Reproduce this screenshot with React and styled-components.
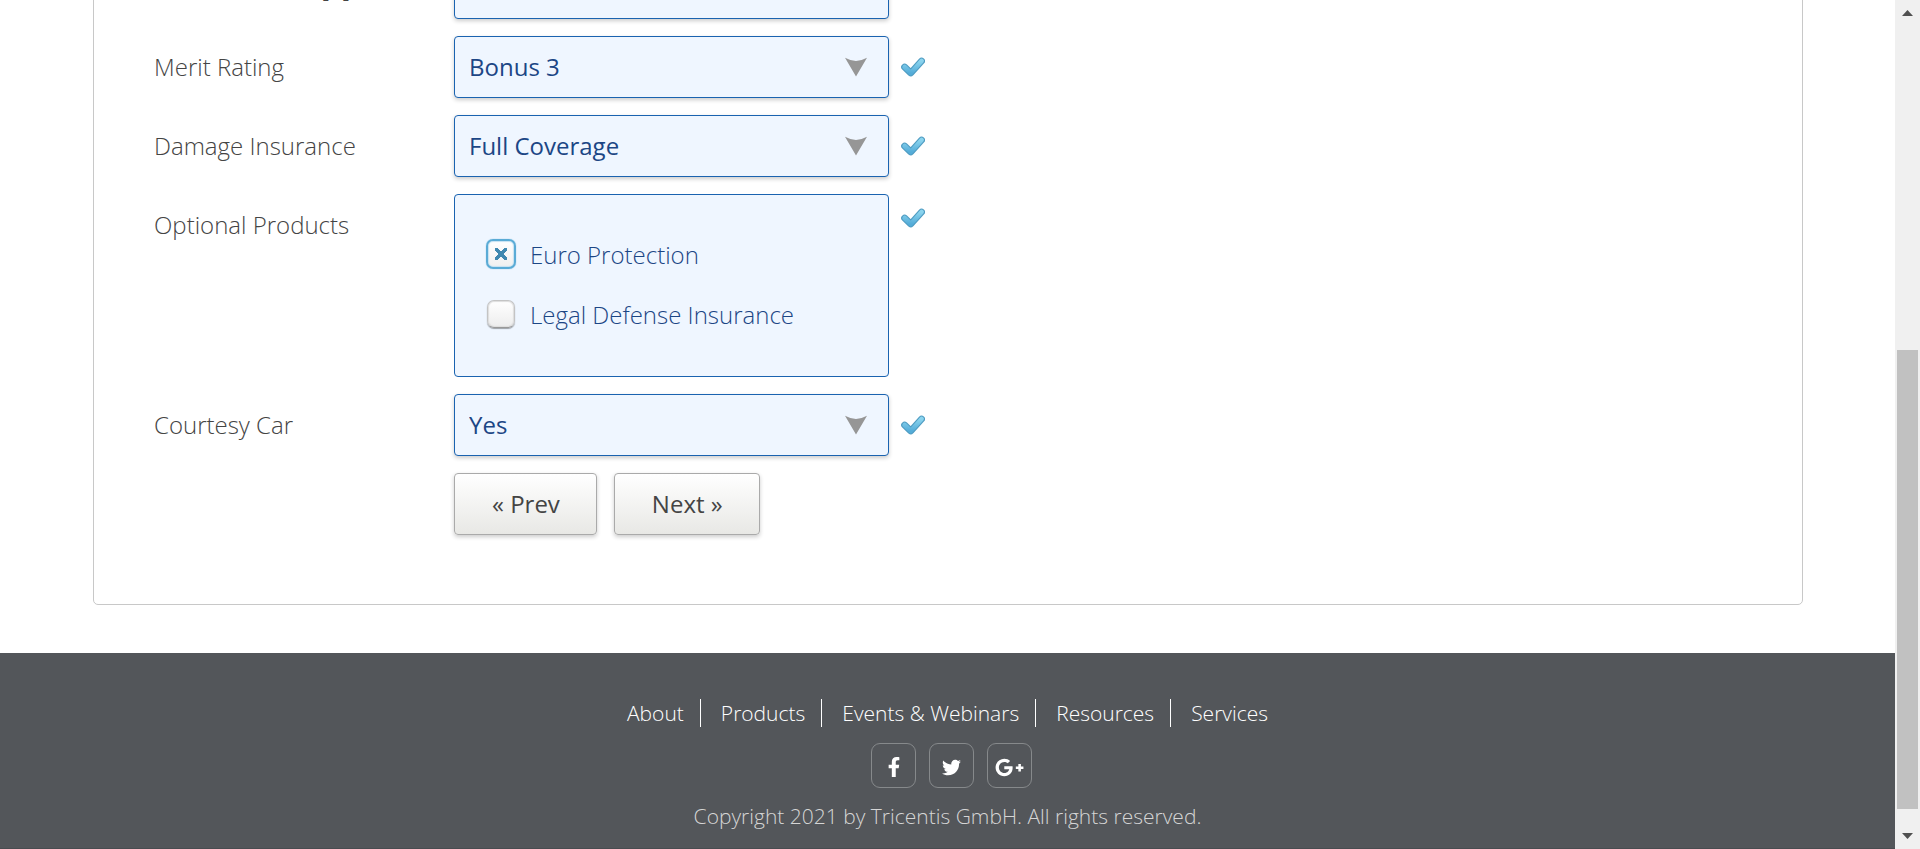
import React from "react";
import styled, { createGlobalStyle, css } from "styled-components";
import { FaFacebookF, FaGooglePlusG, FaTwitter } from "react-icons/fa";

const GlobalStyle = createGlobalStyle`
  *, *::before, *::after { box-sizing: border-box; }
  body {
    margin: 0;
    background: #fff;
    color: #444;
    font: 300 24px/32px "Open Sans", "Liberation Sans", sans-serif;
  }
`;

const Window = styled.div`
  display: flex;
  min-height: 100vh;
  overflow: hidden;
`;

const Page = styled.div`
  flex: 1;
  min-width: 0;
  display: flex;
  flex-direction: column;
`;

const Main = styled.main`
  flex: 1;
  padding: 0 92px 48px 93px;
`;

/* The form is scrolled so that its first visible row is cut by the window's top edge. */
const Card = styled.form`
  display: flex;
  flex-direction: column;
  gap: 17px;
  margin-top: -44px;
  padding: 0 60px 69px;
  border: 1px solid #c8c8c8;
  border-radius: 5px;
`;

const Row = styled.div`
  display: flex;
  align-items: flex-start;
`;

const labelText = css`
  width: 300px;
  flex: none;
  padding-top: 15px;
`;

const Label = styled.label`
  ${labelText}
`;

const Caption = styled.span`
  ${labelText}
`;

const box = css`
  width: 435px;
  background: #eff6ff;
  border: 1px solid #1a63b0;
  border-radius: 4px;
  color: #1c4685;
`;

const SelectWrap = styled.div`
  display: grid;
  align-items: center;
  > * { grid-area: 1 / 1; }
`;

const Select = styled.select`
  ${box}
  appearance: none;
  height: 62px;
  padding: 0 60px 0 14px;
  box-shadow: 0 2px 4px rgba(0, 0, 0, 0.2);
  font: 400 24px/32px "Open Sans", "Liberation Sans", sans-serif;
`;

const ArrowIcon = styled.svg`
  justify-self: end;
  margin-right: 22px;
  pointer-events: none;
`;

const ValidMark = styled.svg`
  flex: none;
  margin: ${(p) => (p.$high ? "13px" : "20px")} 0 0 12px;
`;

const Group = styled.fieldset`
  ${box}
  display: flex;
  flex-direction: column;
  gap: 28px;
  height: 183px;
  margin: 0;
  padding: 44px 31px 0;
`;

const Option = styled.label`
  display: flex;
  align-items: flex-start;
  gap: 14px;
`;

const Tick = styled.input`
  appearance: none;
  flex: none;
  width: 28px;
  height: 28px;
  margin: 1px;
  border: 1px solid #c4c4c4;
  border-bottom-color: #999;
  border-radius: 7px;
  background: linear-gradient(#fff, #ededed);
  background-clip: padding-box;
  box-shadow: inset 0 0 1px 1px #ddd, 0 1px 1px rgba(0, 0, 0, 0.35);

  &:checked {
    width: 30px;
    height: 30px;
    margin: 0;
    border: 2px solid #5aabd6;
    box-shadow: 0 0 1px #5aabd6, inset 0 0 1px 1px #c5e2f2;
    background:
      linear-gradient(45deg, transparent 39%, #4088b0 41%, #4088b0 59%, transparent 61%) center / 12px 12px no-repeat,
      linear-gradient(-45deg, transparent 39%, #4088b0 41%, #4088b0 59%, transparent 61%) center / 12px 12px no-repeat,
      linear-gradient(#fff, #f0f0f0);
  }
`;

const Actions = styled.div`
  display: flex;
  gap: 17px;
  padding-left: 300px;
`;

const Button = styled.button`
  height: 62px;
  padding: 0 36px 0 37px;
  border: 1px solid #aaa;
  border-radius: 4px;
  background: linear-gradient(#fff, #e8e8e5);
  box-shadow: 0 2px 4px rgba(0, 0, 0, 0.2);
  color: #444;
  font: 400 24px/32px "Open Sans", "Liberation Sans", sans-serif;
`;

const Footer = styled.footer`
  display: flex;
  flex-direction: column;
  align-items: center;
  padding: 46px 0 18px;
  background: #53565a;
  border-bottom: 1px solid #494c50;
  color: #d5d5d5;
  font-size: 21px;
  line-height: 28px;
`;

const Links = styled.nav`
  display: flex;
`;

const FooterLink = styled.a`
  padding: 0 20px;
  color: #fff;
  text-decoration: none;
  &:not(:last-child) {
    padding-right: 16px;
    border-right: 1px solid #fff;
  }
`;

const Social = styled.div`
  display: flex;
  gap: 13px;
  margin: 16px 0 14px 8px;
`;

const SocialLink = styled.a`
  display: flex;
  align-items: center;
  justify-content: center;
  width: 45px;
  height: 45px;
  padding-top: 3px;
  border: 1px solid #86898b;
  border-radius: 9px;
  color: #fff;
`;

const Copyright = styled.p`
  margin: 0;
`;

const ScrollTrack = styled.div`
  display: flex;
  flex-direction: column;
  align-items: center;
  flex: none;
  width: 25px;
  padding: 10px 0;
  background: #f0f0f0;
`;

const ScrollSpace = styled.div`
  flex: 334;
`;

const ScrollThumb = styled.div`
  flex: 459;
  width: 21px;
  margin-bottom: 24px;
  background: #c1c1c1;
`;

const Arrow = () => (
  <ArrowIcon width="22" height="20" viewBox="0 0 22 20" aria-hidden="true">
    <path d="M0 0.8Q11 7 22 0.8L11 19.4Z" fill="#969696" />
  </ArrowIcon>
);

const Valid = ({ high }) => (
  <ValidMark $high={high} width="24" height="22" viewBox="0 0 24 22" aria-hidden="true">
    <defs>
      <linearGradient id="tick" x1="0" y1="0" x2="0" y2="1">
        <stop offset="0" stopColor="#8bd4ee" />
        <stop offset="1" stopColor="#54acd8" />
      </linearGradient>
    </defs>
    <path d="M3.6 11L9.8 17L20.6 5" fill="none" stroke="#4f9cc2" strokeWidth="6.8" strokeLinecap="round" strokeLinejoin="round" />
    <path d="M3.6 11L9.8 17L20.6 5" fill="none" stroke="url(#tick)" strokeWidth="4.6" strokeLinecap="round" strokeLinejoin="round" />
  </ValidMark>
);

const SelectRow = ({ id, label, value }) => (
  <Row>
    <Label htmlFor={id}>{label}</Label>
    <SelectWrap>
      <Select id={id} defaultValue={value}>
        <option>{value}</option>
      </Select>
      <Arrow />
    </SelectWrap>
    <Valid />
  </Row>
);

const links = ["About", "Products", "Events & Webinars", "Resources", "Services"];

export default function App() {
  return (
    <>
      <GlobalStyle />
      <Window>
        <Page>
          <Main>
            <Card>
              <SelectRow id="sum" label="Insurance Sum [$]" value="" />
              <SelectRow id="merit" label="Merit Rating" value="Bonus 3" />
              <SelectRow id="damage" label="Damage Insurance" value="Full Coverage" />
              <Row>
                <Caption id="optional">Optional Products</Caption>
                <Group aria-labelledby="optional">
                  <Option>
                    <Tick type="checkbox" defaultChecked />
                    Euro Protection
                  </Option>
                  <Option>
                    <Tick type="checkbox" />
                    Legal Defense Insurance
                  </Option>
                </Group>
                <Valid high />
              </Row>
              <SelectRow id="courtesy" label="Courtesy Car" value="Yes" />
              <Actions>
                <Button type="button">« Prev</Button>
                <Button type="button">Next »</Button>
              </Actions>
            </Card>
          </Main>
          <Footer>
            <Links>
              {links.map((text) => (
                <FooterLink href="#" key={text}>{text}</FooterLink>
              ))}
            </Links>
            <Social>
              <SocialLink href="#" aria-label="Facebook"><FaFacebookF size={20} /></SocialLink>
              <SocialLink href="#" aria-label="Twitter"><FaTwitter size={19} /></SocialLink>
              <SocialLink href="#" aria-label="Google Plus"><FaGooglePlusG size={29} /></SocialLink>
            </Social>
            <Copyright>Copyright 2021 by Tricentis GmbH. All rights reserved.</Copyright>
          </Footer>
        </Page>
        <ScrollTrack aria-hidden="true">
          <svg width="11" height="6" viewBox="0 0 11 6"><path d="M0 6L5.5 0L11 6Z" fill="#505050" /></svg>
          <ScrollSpace />
          <ScrollThumb />
          <svg width="11" height="6" viewBox="0 0 11 6"><path d="M0 0L5.5 6L11 0Z" fill="#505050" /></svg>
        </ScrollTrack>
      </Window>
    </>
  );
}
